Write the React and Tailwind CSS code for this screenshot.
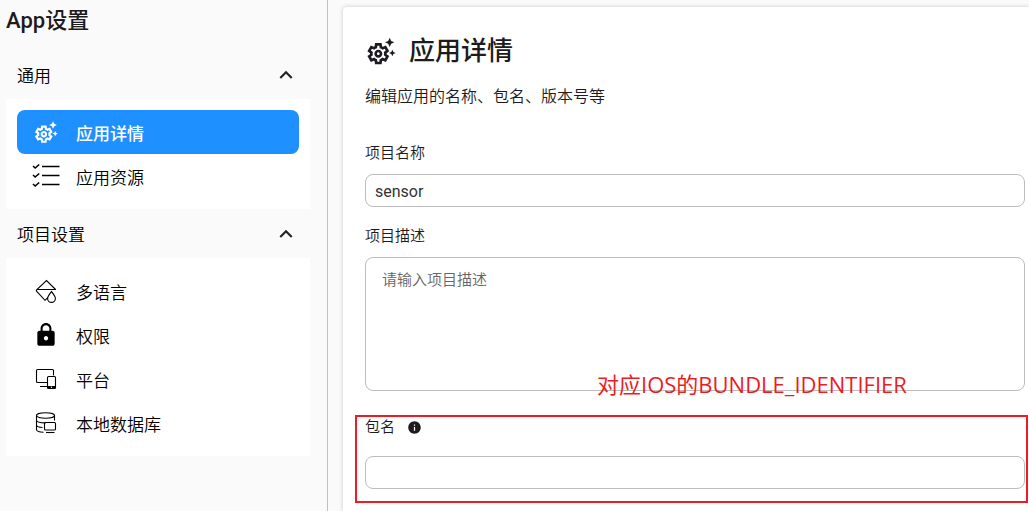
import { useState } from 'react';
import { MdExpandLess, MdExpandMore, MdInfo, MdLock, MdOutlineSettingsSuggest } from 'react-icons/md';

function LineIcon({ children }) {
  return (
    <svg viewBox="0 0 28 28" className="h-7 w-7" fill="none" stroke="currentColor" strokeWidth="1.1" aria-hidden="true">
      {children}
    </svg>
  );
}

const DetailIcon = () => <MdOutlineSettingsSuggest size={26} />;

const LockIcon = () => <MdLock size={26} />;

const ResourceIcon = () => (
  <LineIcon>
    <path d="M10 4.5h17.5M10 13.5h17.5M10 22.5h17.5" strokeWidth="1.5" />
    <path d="M1 4l2.2 2L7.2 2.5M1 13l2.2 2L7.2 11.5M1 22l2.2 2L7.2 20.5" strokeWidth="1.6" />
  </LineIcon>
);

const LanguageIcon = () => (
  <LineIcon>
    <path d="M16 20.5L13 23.3L4.5 14.2Q4 13.5 4.6 12.8L14.5 3.5L23.6 12.5M5.5 12.5h18.5" />
    <path d="M19.5 14.5C17.6 17 15.6 19.3 15.6 21.5a3.9 3.9 0 0 0 7.8 0C23.4 19.3 21.4 17 19.5 14.5z" />
  </LineIcon>
);

const PlatformIcon = () => (
  <LineIcon>
    <path d="M21.5 10.5V5.5a1 1 0 0 0-1-1h-15a1 1 0 0 0-1 1v11a1 1 0 0 0 1 1h10M8 21.5h7" />
    <rect x="15.5" y="11.5" width="8" height="12" rx="1" />
    <path d="M15.5 21h8v2.5h-8z" fill="currentColor" stroke="none" />
    <circle cx="19.5" cy="22.2" r=".7" fill="#fff" stroke="none" />
  </LineIcon>
);

const DatabaseIcon = () => (
  <LineIcon>
    <ellipse cx="13.5" cy="6.5" rx="9" ry="2.7" />
    <path d="M4.5 6.5v14c0 1.4 2.6 2.6 7 2.7M22.5 6.5v5M4.5 11.3c0 1.6 4 2.6 9 2.6M4.5 16c0 1.2 2.4 2.2 6 2.5" />
    <rect x="12.5" y="13.5" width="11" height="7.5" rx="1" />
    <path d="M14 23.5h8.5" />
  </LineIcon>
);

const groups = [
  {
    title: '通用',
    items: [
      { id: 'detail', label: '应用详情', icon: DetailIcon },
      { id: 'resource', label: '应用资源', icon: ResourceIcon },
    ],
  },
  {
    title: '项目设置',
    items: [
      { id: 'language', label: '多语言', icon: LanguageIcon },
      { id: 'permission', label: '权限', icon: LockIcon },
      { id: 'platform', label: '平台', icon: PlatformIcon },
      { id: 'database', label: '本地数据库', icon: DatabaseIcon },
    ],
  },
];

function NavItem({ item, active, onSelect }) {
  const Icon = item.icon;
  return (
    <button
      type="button"
      onClick={() => onSelect(item.id)}
      className={`flex h-11 w-full items-center gap-4 rounded-lg pl-[15px] text-left text-[17px] ${
        active ? 'bg-[#1e90ff] font-medium text-white' : 'font-[350] text-black'
      }`}
    >
      <span className="flex w-7 justify-center">
        <Icon />
      </span>
      <span className="pt-[5px]">{item.label}</span>
    </button>
  );
}

function NavGroup({ group, current, onSelect }) {
  const [open, setOpen] = useState(true);
  const Arrow = open ? MdExpandLess : MdExpandMore;
  return (
    <section>
      <button
        type="button"
        aria-expanded={open}
        onClick={() => setOpen(!open)}
        className="flex h-[49px] w-full items-center justify-between px-[11px] text-[17px] font-[350] text-black"
      >
        <span className="pt-[5px]">{group.title}</span>
        <Arrow size={26} className="text-[#222]" />
      </button>
      {open && (
        <div className="bg-white p-[11px]">
          {group.items.map((item) => (
            <NavItem key={item.id} item={item} active={item.id === current} onSelect={onSelect} />
          ))}
        </div>
      )}
    </section>
  );
}

export default function App() {
  const [current, setCurrent] = useState('detail');
  const [name, setName] = useState('sensor');

  return (
    <div className="flex h-screen overflow-hidden bg-[#fafafa] font-['Roboto','Noto_Sans_CJK_SC',sans-serif] text-[#1d1b20]">
      <aside className="w-[328px] shrink-0 border-r border-[#c0c0c0] pr-[17px] pl-[6px]">
        <h1 className="h-[50px] text-[22px] leading-[42px] font-medium">App设置</h1>
        <nav>
          {groups.map((group) => (
            <NavGroup key={group.title} group={group} current={current} onSelect={setCurrent} />
          ))}
        </nav>
      </aside>

      <main className="flex min-w-0 flex-1 pt-[7px] pl-[15px]">
        <div className="flex-1 rounded-tl bg-white pt-6 pr-1 pl-[22px] shadow-[0_0_4px_rgba(0,0,0,0.2)]">
          <h2 className="flex h-10 items-center gap-3 text-[26px] font-medium">
            <MdOutlineSettingsSuggest size={32} />
            应用详情
          </h2>
          <p className="mt-[14px] text-base font-[350]">编辑应用的名称、包名、版本号等</p>

          <form className="mt-8" onSubmit={(e) => e.preventDefault()}>
            <label htmlFor="name" className="block text-[15px] leading-6 font-[350]">
              项目名称
            </label>
            <input
              id="name"
              value={name}
              onChange={(e) => setName(e.target.value)}
              className="mt-[9px] block h-[33px] w-full rounded-lg border border-[#bdbdbd] px-[9px] pt-[2px] text-base text-[#333]"
            />

            <label htmlFor="desc" className="mt-[17px] block text-[15px] leading-6 font-[350]">
              项目描述
            </label>
            <div className="relative mt-[9px]">
              <textarea
                id="desc"
                placeholder="请输入项目描述"
                className="block h-[134px] w-full resize-none rounded-lg border border-[#bdbdbd] px-4 py-[10px] text-[15px] leading-6 font-[350] placeholder:text-[#666]"
              />
              <p className="absolute -bottom-[9px] left-[232px] font-['Open_Sans','Noto_Sans_CJK_SC',sans-serif] text-[22px] leading-8 whitespace-nowrap text-[#ed1c24]">
                对应IOS的BUNDLE_IDENTIFIER
              </p>
            </div>

            <div className="relative mt-6">
              <div className="pointer-events-none absolute top-0 -right-[3px] -bottom-[14px] -left-[10px] border-2 border-[#ed1c24]" />
              <div className="flex items-center gap-3">
                <label htmlFor="package" className="text-[15px] leading-6 font-[350]">
                  包名
                </label>
                <MdInfo size={15} />
              </div>
              <input
                id="package"
                className="mt-[17px] block h-[33px] w-full rounded-lg border border-[#bdbdbd] px-[9px] text-base"
              />
            </div>
          </form>
        </div>
      </main>
    </div>
  );
}
